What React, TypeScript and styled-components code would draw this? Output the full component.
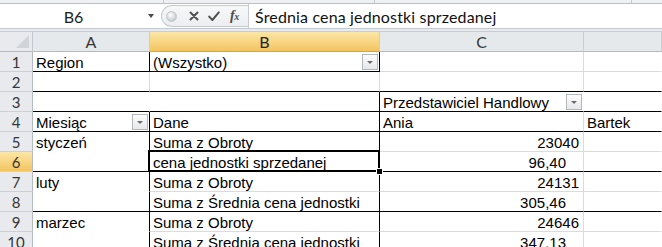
import React from 'react';
import styled, { createGlobalStyle, css } from 'styled-components';

type Line = 'k' | 'g' | 'n';

const lineColor = (l: Line) => (l === 'k' ? '#000000' : l === 'g' ? '#d9dbdd' : '#ffffff');

const GlobalStyle = createGlobalStyle`
  html, body { margin: 0; padding: 0; background: #ffffff; }
  body { overflow: hidden; }
`;

const Window = styled.div`
  width: 662px;
  height: 247px;
  overflow: hidden;
  background: #ffffff;
  display: flex;
  flex-direction: column;
  font-family: "Liberation Sans", Arial, sans-serif;
  & > * {
    flex-shrink: 0;
  }
`;

const TopStrip = styled.div`
  height: 3px;
  background: #eef0f3;
  border-bottom: 1px solid #b9bfc7;
  display: grid;
  grid-template-columns: 164px 211px 257px 1fr;
`;

const StripSeg = styled.div`
  border-right: 1px solid #c4c9d0;
`;

const FormulaBar = styled.div`
  height: 24px;
  border-bottom: 1px solid #c4c9cf;
  display: flex;
  align-items: stretch;
  background: #ffffff;
`;

const NameBox = styled.div`
  width: 147px;
  display: flex;
  align-items: center;
  justify-content: center;
  font-family: Lato, "Noto Sans", sans-serif;
  font-size: 16px;
  color: #1e1e1e;
`;

const NameArrow = styled.div`
  width: 13px;
  display: flex;
  align-items: center;
  justify-content: flex-start;
  padding-left: 1px;
  &::after {
    content: '';
    border-left: 3.5px solid transparent;
    border-right: 3.5px solid transparent;
    border-top: 4px solid #4a4a4a;
  }
`;

const ControlGroup = styled.div`
  width: 86px;
  display: flex;
  align-items: center;
  background: linear-gradient(#f7f8f9, #eceef1);
  border: 1px solid #c6cbd1;
  border-right: none;
  border-radius: 12px 0 0 12px;
  margin: 1px 0;
`;

const Knob = styled.span`
  width: 9px;
  height: 9px;
  border-radius: 50%;
  margin-left: 4px;
  background: radial-gradient(circle at 40% 35%, #ffffff, #c9ccd0 70%);
  border: 1px solid #c2c6cb;
`;

const IconSlot = styled.span<{ $ml: number }>`
  margin-left: ${(p) => p.$ml}px;
  display: flex;
  align-items: center;
`;

const FxLabel = styled.span`
  margin-left: 10px;
  font-family: "Liberation Serif", "DejaVu Serif", serif;
  font-style: italic;
  font-weight: bold;
  font-size: 14px;
  color: #4b4b4b;
  letter-spacing: -0.5px;
  & sub {
    font-size: 10px;
    vertical-align: 0;
  }
`;

const FormulaInput = styled.div`
  flex: 1;
  border-left: 1px solid #c6cbd1;
  display: flex;
  align-items: center;
  padding-left: 6px;
  font-family: Lato, "Noto Sans", sans-serif;
  font-size: 16px;
  letter-spacing: 0.15px;
  color: #111111;
  white-space: nowrap;
`;

const Gap = styled.div`
  height: 2px;
  background: #e7eaee;
`;

const Sheet = styled.div`
  display: grid;
  grid-template-columns: 33px 117px 230px 204px 1fr;
  grid-template-rows: 21px;
  grid-auto-rows: 20px;
`;

const headerFont = css`
  font-family: Lato, "Noto Sans", sans-serif;
  font-size: 15px;
  color: #363636;
`;

const activeBg = css`
  background: linear-gradient(#fbe6a6, #f8d47f 55%, #f3c45f);
`;

const Corner = styled.div`
  box-sizing: border-box;
  background: #e8eaed;
  border-right: 1px solid #c3c8ce;
  border-bottom: 1px solid #b4bac2;
  border-top: 1px solid #c8cdd3;
  position: relative;
  &::after {
    content: '';
    position: absolute;
    right: 3px;
    bottom: 3px;
    width: 13px;
    height: 13px;
    background: #d0d4d9;
    clip-path: polygon(100% 0, 100% 100%, 0 100%);
  }
`;

const ColHeader = styled.div<{ $active?: boolean }>`
  box-sizing: border-box;
  ${headerFont}
  font-size: 16px;
  background: #e6e9ec;
  border-right: 1px solid #c8cdd3;
  border-bottom: 1px solid #b4bac2;
  border-top: 1px solid #c8cdd3;
  display: flex;
  align-items: center;
  justify-content: center;
  ${(p) => p.$active && activeBg}
  ${(p) => p.$active && css`border-bottom-color: #d9a53d; color: #222;`}
`;

const HeaderRow = styled.div`
  display: contents;
`;

const RowHeader = styled.div<{ $active?: boolean }>`
  box-sizing: border-box;
  ${headerFont}
  background: #e8eaed;
  border-right: 1px solid #b4bac2;
  border-bottom: 1px solid #cdd1d6;
  display: flex;
  align-items: center;
  justify-content: center;
  padding-top: 1px;
  ${(p) => p.$active && activeBg}
`;

const Cell = styled.div<{ $r: Line; $b: Line; $align: 'left' | 'right'; $pr: number; $selected?: boolean }>`
  box-sizing: border-box;
  position: relative;
  border-right: 1px solid ${(p) => lineColor(p.$r)};
  border-bottom: 1px solid ${(p) => lineColor(p.$b)};
  display: flex;
  align-items: center;
  justify-content: ${(p) => (p.$align === 'right' ? 'flex-end' : 'flex-start')};
  padding: 1px ${(p) => p.$pr}px 0 3px;
  font-size: 15px;
  color: #000000;
  white-space: nowrap;
  overflow: visible;
  ${(p) =>
    p.$selected &&
    css`
      z-index: 2;
      &::before {
        content: '';
        position: absolute;
        top: -2px;
        left: -2px;
        right: -1px;
        bottom: -1px;
        border: 2px solid #000;
        pointer-events: none;
      }
      &::after {
        content: '';
        position: absolute;
        right: -4px;
        bottom: -4px;
        width: 5px;
        height: 5px;
        background: #000;
        border: 1px solid #fff;
      }
    `}
`;

const CellText = styled.span`
  flex: 0 1 auto;
`;

const Spacer = styled.span`
  flex: 1;
`;

const DropBtn = styled.span`
  width: 16px;
  height: 16px;
  box-sizing: border-box;
  flex: 0 0 auto;
  border: 1px solid #b4b8bd;
  background: linear-gradient(#fdfdfd, #e6e8ea);
  display: flex;
  align-items: center;
  justify-content: center;
  &::after {
    content: '';
    border-left: 3.5px solid transparent;
    border-right: 3.5px solid transparent;
    border-top: 3.5px solid #6b6b6b;
  }
`;

type CellDef = {
  t?: string;
  r: Line;
  b: Line;
  align?: 'left' | 'right';
  pr?: number;
  drop?: boolean;
  sel?: boolean;
};

const INT = 4;
const DEC = 17;

const rows: CellDef[][] = [
  [
    { t: 'Region', r: 'k', b: 'k' },
    { t: '(Wszystko)', r: 'k', b: 'k', drop: true },
    { r: 'g', b: 'g' },
    { r: 'n', b: 'g' },
  ],
  [
    { r: 'g', b: 'k' },
    { r: 'g', b: 'k' },
    { r: 'g', b: 'k' },
    { r: 'n', b: 'k' },
  ],
  [
    { r: 'n', b: 'k' },
    { r: 'k', b: 'k' },
    { t: 'Przedstawiciel Handlowy', r: 'n', b: 'k', drop: true },
    { r: 'n', b: 'k' },
  ],
  [
    { t: 'Miesiąc', r: 'k', b: 'k', drop: true },
    { t: 'Dane', r: 'k', b: 'k' },
    { t: 'Ania', r: 'g', b: 'k' },
    { t: 'Bartek', r: 'n', b: 'k' },
  ],
  [
    { t: 'styczeń', r: 'k', b: 'n' },
    { t: 'Suma z Obroty', r: 'k', b: 'g' },
    { t: '23040', r: 'g', b: 'g', align: 'right', pr: INT },
    { r: 'n', b: 'g' },
  ],
  [
    { r: 'k', b: 'k' },
    { t: 'cena jednostki sprzedanej', r: 'k', b: 'k', sel: true },
    { t: '96,40', r: 'g', b: 'k', align: 'right', pr: DEC },
    { r: 'n', b: 'k' },
  ],
  [
    { t: 'luty', r: 'k', b: 'n' },
    { t: 'Suma z Obroty', r: 'k', b: 'g' },
    { t: '24131', r: 'g', b: 'g', align: 'right', pr: INT },
    { r: 'n', b: 'g' },
  ],
  [
    { r: 'k', b: 'k' },
    { t: 'Suma z Średnia cena jednostki', r: 'k', b: 'k' },
    { t: '305,46', r: 'g', b: 'k', align: 'right', pr: DEC },
    { r: 'n', b: 'k' },
  ],
  [
    { t: 'marzec', r: 'k', b: 'n' },
    { t: 'Suma z Obroty', r: 'k', b: 'g' },
    { t: '24646', r: 'g', b: 'g', align: 'right', pr: INT },
    { r: 'n', b: 'g' },
  ],
  [
    { r: 'k', b: 'k' },
    { t: 'Suma z Średnia cena jednostki', r: 'k', b: 'k' },
    { t: '347,13', r: 'g', b: 'k', align: 'right', pr: DEC },
    { r: 'n', b: 'k' },
  ],
];

const CancelIcon = () => (
  <svg width="10" height="10" viewBox="0 0 10 10">
    <path d="M1.5 1.5 L8.5 8.5 M8.5 1.5 L1.5 8.5" stroke="#505050" strokeWidth="2" strokeLinecap="round" />
  </svg>
);

const EnterIcon = () => (
  <svg width="12" height="11" viewBox="0 0 12 11">
    <path d="M1.2 5.6 L4.4 9 L10.8 1.4" stroke="#505050" strokeWidth="2" fill="none" strokeLinecap="round" strokeLinejoin="round" />
  </svg>
);

export default function App() {
  return (
    <>
      <GlobalStyle />
      <Window>
        <TopStrip>
          <StripSeg />
          <StripSeg />
          <StripSeg />
          <div />
        </TopStrip>
        <FormulaBar>
          <NameBox>B6</NameBox>
          <NameArrow />
          <ControlGroup>
            <Knob />
            <IconSlot $ml={12}>
              <CancelIcon />
            </IconSlot>
            <IconSlot $ml={9}>
              <EnterIcon />
            </IconSlot>
            <FxLabel>
              f<sub>x</sub>
            </FxLabel>
          </ControlGroup>
          <FormulaInput>Średnia cena jednostki sprzedanej</FormulaInput>
        </FormulaBar>
        <Gap />
        <Sheet>
          <HeaderRow>
            <Corner />
            <ColHeader>A</ColHeader>
            <ColHeader $active>B</ColHeader>
            <ColHeader>C</ColHeader>
            <ColHeader />
          </HeaderRow>
          {rows.map((row, i) => (
            <React.Fragment key={i}>
              <RowHeader $active={i === 5}>{i + 1}</RowHeader>
              {row.map((c, j) => (
                <Cell
                  key={j}
                  $r={c.r}
                  $b={c.b}
                  $align={c.align ?? 'left'}
                  $pr={c.pr ?? 1}
                  $selected={c.sel}
                >
                  {c.t && <CellText>{c.t}</CellText>}
                  {c.drop && (
                    <>
                      <Spacer />
                      <DropBtn />
                    </>
                  )}
                </Cell>
              ))}
            </React.Fragment>
          ))}
        </Sheet>
      </Window>
    </>
  );
}
